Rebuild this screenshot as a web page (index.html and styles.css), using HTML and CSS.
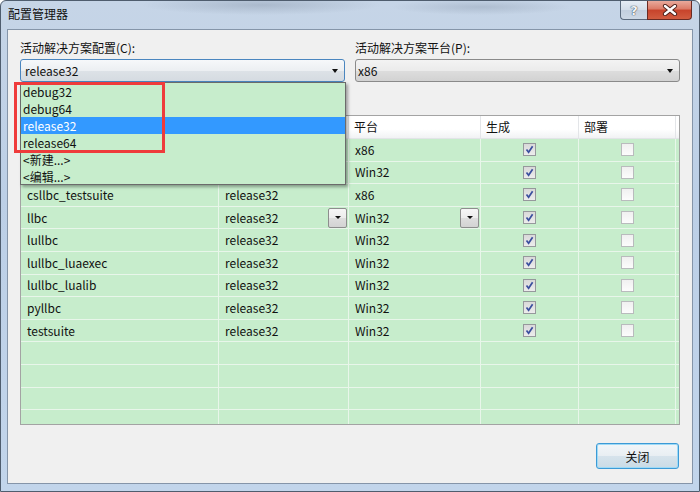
FILE: index.html
```html
<!DOCTYPE html>
<html lang="zh-CN">
  <head>
    <meta charset="UTF-8" />
    <meta name="viewport" content="width=device-width, initial-scale=1.0" />
    <title>配置管理器</title>
    <link rel="stylesheet" href="styles.css">
  </head>
  <body>
    <div class="window">
      <div class="titlebar">
        <span class="title">配置管理器</span>
        <div class="caption-buttons">
          <div class="btn-help">?</div>
          <div class="btn-close">
            <svg width="16" height="12" viewBox="0 0 16 12">
              <path d="M3 2 L13 10 M13 2 L3 10" stroke="#4a1e17" stroke-width="4.2" stroke-linecap="round" fill="none" />
              <path d="M3 2 L13 10 M13 2 L3 10" stroke="#ffffff" stroke-width="2.4" stroke-linecap="round" fill="none" />
            </svg>
          </div>
        </div>
      </div>

      <div class="client">
        <div class="selectors">
          <div class="field field-open">
            <label>活动解决方案配置(C):</label>
            <div class="combo combo-active">
              <span>release32</span>
              <span class="arrow"></span>
            </div>
            <!-- opened drop-down list, covers the top left of the grid -->
            <div class="droplist">
              <div class="item">debug32</div>
              <div class="item">debug64</div>
              <div class="item selected">release32</div>
              <div class="item">release64</div>
              <div class="item">&lt;新建...&gt;</div>
              <div class="item">&lt;编辑...&gt;</div>
            </div>
            <div class="mark"></div>
          </div>
          <div class="field">
            <label>活动解决方案平台(P):</label>
            <div class="combo combo-plain">
              <span>x86</span>
              <span class="arrow"></span>
            </div>
          </div>
        </div>

        <div class="grid">
          <div class="row head">
            <div class="cell"></div>
            <div class="cell"></div>
            <div class="cell">平台</div>
            <div class="cell">生成</div>
            <div class="cell">部署</div>
          </div>
          <div id="rows"></div>
        </div>

        <div class="footer">
          <button class="btn-main">关闭</button>
        </div>
      </div>
    </div>

    <script>
      // project rows of the configuration grid (first two are hidden by the list)
      const projects = [
        ["", "", "x86"],
        ["", "", "Win32"],
        ["csllbc_testsuite", "release32", "x86"],
        ["llbc", "release32", "Win32", true],
        ["lullbc", "release32", "Win32"],
        ["lullbc_luaexec", "release32", "Win32"],
        ["lullbc_lualib", "release32", "Win32"],
        ["pyllbc", "release32", "Win32"],
        ["testsuite", "release32", "Win32"],
      ];

      const check =
        '<svg width="13" height="13" viewBox="0 0 13 13"><path d="M3.5 6.5 L5.6 9.3 L9.6 3.2" stroke="#3a4f9e" stroke-width="1.7" fill="none"/></svg>';
      const pick = '<span class="pick"><span class="arrow"></span></span>';

      const rowsBox = document.getElementById("rows");
      projects.forEach((p) => {
        const row = document.createElement("div");
        row.className = "row";
        row.innerHTML =
          '<div class="cell">' + p[0] + "</div>" +
          '<div class="cell">' + p[1] + (p[3] ? pick : "") + "</div>" +
          '<div class="cell">' + p[2] + (p[3] ? pick : "") + "</div>" +
          '<div class="cell center"><span class="box checked">' + check + "</span></div>" +
          '<div class="cell center"><span class="box"></span></div>';
        rowsBox.appendChild(row);
      });

      // empty rows fill the rest of the grid
      for (let i = 0; i < 4; i++) {
        const row = document.createElement("div");
        row.className = "row";
        row.innerHTML = '<div class="cell"></div>'.repeat(5);
        rowsBox.appendChild(row);
      }
    </script>
  </body>
</html>
```

FILE: styles.css
```css
* {
  box-sizing: border-box;
}

body {
  margin: 0;
  font-family: "Noto Sans CJK SC", "Microsoft YaHei", sans-serif;
  font-size: 12px;
  color: #111111;
  background: #ffffff;
}

.window {
  width: 700px;
  height: 492px;
  display: flex;
  flex-direction: column;
  padding: 0 6px 7px;
  border: 1px solid #4f5d6e;
  border-radius: 6px 6px 0 0;
  background:
    radial-gradient(ellipse 120px 10px at 260px 4px, rgba(120, 135, 155, 0.35), transparent),
    radial-gradient(ellipse 90px 8px at 480px 6px, rgba(120, 135, 155, 0.3), transparent),
    linear-gradient(180deg, #c6d5e7 0%, #bccfe6 40%, #c2d5eb 100%);
}

.titlebar {
  height: 28px;
  display: flex;
  align-items: flex-start;
}

.title {
  padding: 5px 0 0 1px;
  line-height: 16px;
  color: #111111;
}

.caption-buttons {
  display: flex;
  margin-left: auto;
  margin-right: 1px;
}

.btn-help,
.btn-close {
  height: 19px;
  display: flex;
  align-items: center;
  justify-content: center;
  border: 1px solid #5b6a7d;
  border-top: none;
}

.btn-help {
  width: 27px;
  border-right: none;
  border-radius: 0 0 0 4px;
  background: linear-gradient(180deg, #e6edf5 0%, #d3dde9 50%, #c3cfde 51%, #cdd8e5 100%);
  font-family: "DejaVu Sans", sans-serif;
  font-weight: bold;
  font-size: 13px;
  color: #f3f5f8;
  text-shadow: 0 0 1px #2e3946, 0 0 1px #2e3946;
}

.btn-close {
  width: 45px;
  border-color: #6a2a22;
  border-radius: 0 0 4px 0;
  background: linear-gradient(180deg, #e9aa9c 0%, #db7a66 45%, #c7432b 50%, #d15c40 100%);
}

.client {
  flex: 1;
  display: flex;
  flex-direction: column;
  padding: 10px 12px 0;
  border: 1px solid #8595a9;
  background: #f0f0f0;
}

.selectors {
  display: grid;
  grid-template-columns: 1fr 1fr;
  gap: 10px;
}

.field {
  position: relative;
}

.field-open {
  z-index: 2;
}

.field label {
  display: block;
  line-height: 16px;
  margin-bottom: 3px;
}

.combo {
  height: 23px;
  display: flex;
  align-items: center;
  justify-content: space-between;
  padding: 0 4px 0 4px;
  border-radius: 3px;
  line-height: 16px;
}

.combo-plain {
  padding-left: 2px;
  border: 1px solid #8a8a8a;
  background: linear-gradient(180deg, #f3f3f3 0%, #ebebeb 50%, #dddddd 51%, #d2d2d2 100%);
}

.combo-active {
  border: 1px solid #4a86bf;
  background: linear-gradient(180deg, #f6f8fa 0%, #eceff2 50%, #dde2e7 51%, #d5dbe1 100%);
}

.arrow {
  width: 0;
  height: 0;
  border-left: 3.5px solid transparent;
  border-right: 3.5px solid transparent;
  border-top: 4px solid #111111;
  margin-right: 2px;
}

.droplist {
  position: absolute;
  left: 0;
  top: 42px;
  width: 326px;
  height: 103px;
  border: 1px solid #6b6b6b;
  background: #c7edcc;
  box-shadow: 2px 2px 3px rgba(0, 0, 0, 0.35);
}

.item {
  height: 17px;
  line-height: 17px;
  padding-left: 2px;
}

.item.selected {
  background: #3399ff;
  color: #ffffff;
}

.mark {
  position: absolute;
  left: -6px;
  top: 42px;
  width: 151px;
  height: 71px;
  border: 3px solid #ef3b3b;
}

.grid {
  margin-top: 33px;
  height: 310px;
  overflow: hidden;
  border: 1px solid #a3a3a3;
  background: #c7edcc;
}

.row {
  display: grid;
  grid-template-columns: 198px 130px 132px 98px 97px;
  height: 22.6px;
  border-bottom: 1px solid #e8f6ea;
}

.row.head {
  height: 23px;
  background: linear-gradient(180deg, #ffffff 0%, #ffffff 60%, #f1f2f4 100%);
  border-bottom: 1px solid #e2e4e7;
}

.cell {
  display: flex;
  align-items: center;
  justify-content: space-between;
  padding: 0 1px 0 6px;
  border-right: 1px solid #e8f6ea;
  line-height: 16px;
  white-space: nowrap;
}

.head .cell {
  padding-left: 5px;
  border-right-color: #e3e5e8;
}

.cell.center {
  justify-content: center;
  padding: 0;
}

.box {
  width: 13px;
  height: 13px;
  display: block;
  border: 1px solid #b9bbbd;
  background: linear-gradient(180deg, #f0f0f0, #fcfcfc);
}

.box.checked {
  border-color: #96989c;
  background: linear-gradient(180deg, #d9d9d9, #ececec);
}

.box svg {
  display: block;
  margin: -1px;
}

.pick {
  width: 19px;
  height: 20px;
  display: flex;
  align-items: center;
  justify-content: center;
  border: 1px solid #8d8d8d;
  border-radius: 2px;
  background: linear-gradient(180deg, #f6f6f6 0%, #ececec 50%, #dedede 51%, #d3d3d3 100%);
}

.pick .arrow {
  margin-right: 0;
  border-left-width: 3px;
  border-right-width: 3px;
  border-top-width: 3px;
}

.footer {
  display: flex;
  justify-content: flex-end;
  margin-top: 18px;
}

.btn-main {
  width: 83px;
  height: 26px;
  margin-right: 1px;
  font-family: inherit;
  font-size: 12px;
  color: #111111;
  border: 1px solid #3c9ad6;
  border-radius: 3px;
  box-shadow: inset 0 0 0 1px #9fdaf6;
  background: linear-gradient(180deg, #f2f6f9 0%, #e8eef3 50%, #d6e3ec 51%, #cadbe6 100%);
}
```
